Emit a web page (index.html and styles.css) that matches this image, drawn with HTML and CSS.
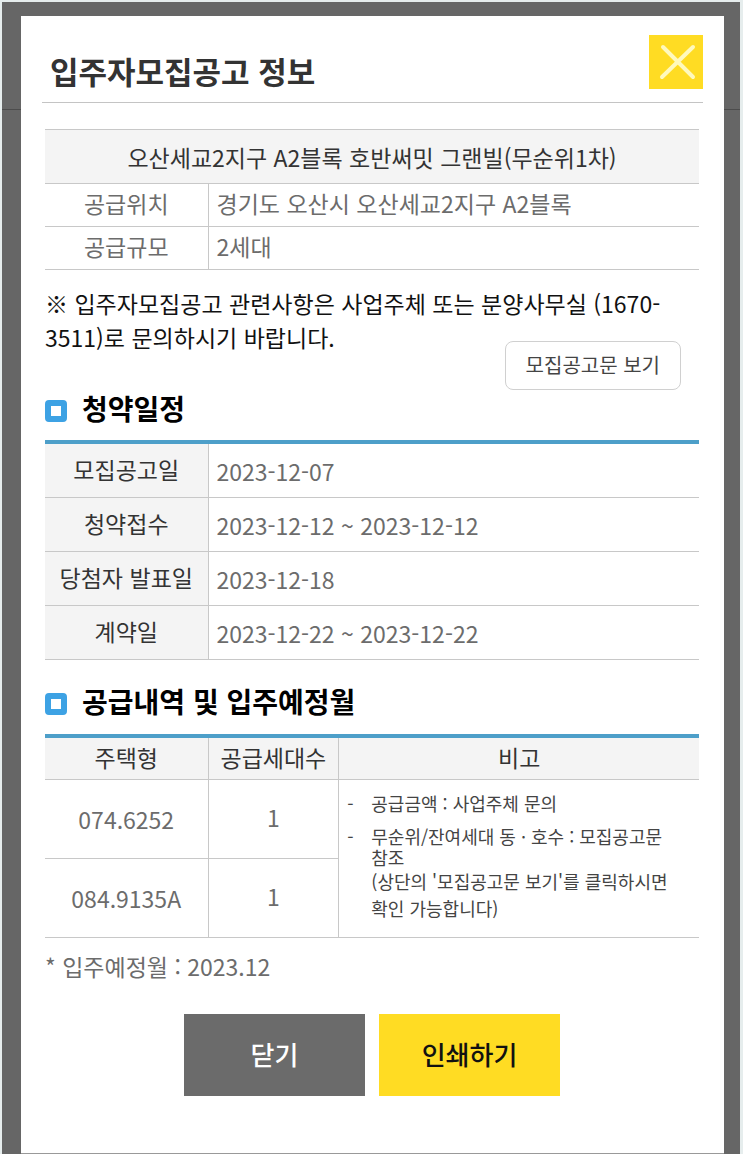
FILE: index.html
```html
<!DOCTYPE html>
<html lang="ko">
<head>
<meta charset="utf-8">
<meta name="viewport" content="width=device-width, initial-scale=1">
<title>입주자모집공고 정보</title>
<link rel="stylesheet" href="styles.css">
</head>
<body>
<div class="backdrop">
  <main class="modal" role="dialog" aria-labelledby="modal-title">
    <header class="modal-header">
      <h1 class="modal-title" id="modal-title">입주자모집공고 정보</h1>
      <button class="close-button" type="button" aria-label="창 닫기">
        <svg class="close-icon" viewBox="0 0 54 54" aria-hidden="true"><path d="M14 12 44 42M44 12 13 42"/></svg>
      </button>
    </header>
    <div class="modal-body">
      <table class="table summary-table">
        <colgroup><col class="col-label"><col></colgroup>
        <thead>
          <tr><th class="summary-name" colspan="2">오산세교2지구 A2블록 호반써밋 그랜빌(무순위1차)</th></tr>
        </thead>
        <tbody>
          <tr><th class="summary-label" scope="row">공급위치</th><td>경기도 오산시 오산세교2지구 A2블록</td></tr>
          <tr><th class="summary-label" scope="row">공급규모</th><td>2세대</td></tr>
        </tbody>
      </table>
      <p class="notice">※ 입주자모집공고 관련사항은 사업주체 또는 분양사무실 (1670-3511)로 문의하시기 바랍니다.</p>

      <div class="schedule-head">
        <h2 class="section-title">청약일정</h2>
        <button class="view-button" type="button">모집공고문 보기</button>
      </div>
      <table class="table accent-table schedule-table">
        <colgroup><col class="col-label"><col></colgroup>
        <tbody>
          <tr><th scope="row">모집공고일</th><td>2023-12-07</td></tr>
          <tr><th scope="row">청약접수</th><td>2023-12-12 ~ 2023-12-12</td></tr>
          <tr><th scope="row">당첨자 발표일</th><td>2023-12-18</td></tr>
          <tr><th scope="row">계약일</th><td>2023-12-22 ~ 2023-12-22</td></tr>
        </tbody>
      </table>

      <h2 class="section-title supply-title">공급내역 및 입주예정월</h2>
      <table class="table accent-table supply-table">
        <colgroup><col class="col-label"><col class="col-count"><col></colgroup>
        <thead>
          <tr><th scope="col">주택형</th><th scope="col">공급세대수</th><th scope="col">비고</th></tr>
        </thead>
        <tbody>
          <tr>
            <td class="type">074.6252</td>
            <td class="count">1</td>
            <td class="remarks" rowspan="2">
              <ul class="remark-list">
                <li>공급금액 : 사업주체 문의</li>
                <li>무순위/잔여세대 동 · 호수 : 모집공고문 참조
                  <p class="remark-detail">(상단의 '모집공고문 보기'를 클릭하시면 확인 가능합니다)</p>
                </li>
              </ul>
            </td>
          </tr>
          <tr><td class="type">084.9135A</td><td class="count">1</td></tr>
        </tbody>
      </table>
      <p class="move-in">* 입주예정월 : 2023.12</p>
      <div class="actions">
        <button class="action action-close" type="button">닫기</button>
        <button class="action action-print" type="button">인쇄하기</button>
      </div>
    </div>
  </main>
</div>
</body>
</html>
```
FILE: styles.css
```css
*,
*::before {
  box-sizing: border-box;
}

body {
  margin: 0;
  background: #e6eded;
  color: #111;
  font-family: "Noto Sans CJK KR", sans-serif;
  font-size: 23px;
  line-height: 34px;
}

h1, h2, p, ul {
  margin: 0;
  padding: 0;
}

button {
  padding: 0;
  border: 0;
  font-family: inherit;
  cursor: pointer;
}

.backdrop {
  position: relative;
  display: flex;
  min-height: 100vh;
  padding: 14px 16px 0 19px;
  border: solid #e6eded;
  border-width: 2px 3px 0 2px;
  background: #666;
}

/* divider of the page behind the dialog */
.backdrop::before {
  content: "";
  position: absolute;
  top: 107px;
  left: 0;
  right: 0;
  height: 1px;
  background: #4c4c4c;
}

.modal {
  position: relative;
  flex: 1;
  padding: 19px 21px 57px;
  border-bottom: 1px solid #999;
  background: #fff;
}

.modal-header {
  display: flex;
  align-items: flex-start;
  justify-content: space-between;
  height: 68px;
  padding-left: 8px;
  border-bottom: 1px solid #c4c4c4;
}

.modal-title {
  padding-top: 14px;
  color: #333;
  font-size: 31px;
  font-weight: 700;
  line-height: 44px;
}

.close-button {
  width: 54px;
  height: 54px;
  background: #ffdc23;
}

.close-icon {
  display: block;
  fill: none;
  stroke: #fff9bd;
  stroke-width: 4;
  stroke-linecap: round;
}

.modal-body {
  padding: 26px 4px 0 3px;
}

.table {
  width: 100%;
  table-layout: fixed;
  border-spacing: 0;
}

.col-label {
  width: 25%;
}

.col-count {
  width: 20%;
}

.table th,
.table td {
  padding: 0 8px;
  border-right: 1px solid #c8c8c8;
  border-bottom: 1px solid #c8c8c8;
  font-weight: 400;
}

.table th {
  padding-bottom: 4px;
  background: #f4f4f4;
  color: #333;
}

.table td {
  color: #6c6c6c;
}

.table tr > :last-child:not(.count) {
  border-right: 0;
}

.table .summary-name {
  height: 55px;
  padding-bottom: 0;
  border-top: 1px solid #c8c8c8;
}

.summary-table tbody tr {
  height: 43px;
}

.table .summary-label {
  background: #fff;
  color: #6c6c6c;
}

.summary-table td {
  padding-bottom: 4px;
}

.notice {
  padding-top: 16px;
}

.schedule-head {
  display: flex;
  justify-content: space-between;
  align-items: flex-start;
  height: 99px;
  margin-top: -13px;
  padding-right: 18px;
}

.section-title {
  display: flex;
  align-items: center;
  gap: 15px;
  color: #000;
  font-size: 28px;
  font-weight: 700;
  line-height: 40px;
}

.section-title::before {
  content: "";
  width: 22px;
  height: 22px;
  margin-top: 6px;
  border: 6px solid #3da2e4;
  border-radius: 4px;
}

.schedule-head .section-title {
  align-self: flex-end;
  padding-bottom: 12px;
}

.view-button {
  height: 49px;
  padding: 0 20px 2px;
  border: 1px solid #d0d0d0;
  border-radius: 8px;
  background: #fff;
  color: #444;
  font-size: 20px;
}

.accent-table {
  border-top: 4px solid #4d9fc9;
}

.schedule-table tr {
  height: 54px;
}

.supply-title {
  padding: 21px 0 13px;
}

.supply-table thead tr {
  height: 42px;
}

.supply-table .type,
.supply-table .count {
  height: 79px;
  text-align: center;
}

.supply-table .count {
  padding-bottom: 4px;
}

.supply-table .remarks {
  padding: 13px 8px 12px;
  color: #444;
  font-size: 18px;
  line-height: 21px;
  vertical-align: top;
  word-break: keep-all;
}

.remark-list {
  display: grid;
  gap: 12px;
  list-style: none;
}

.remark-list li {
  position: relative;
  padding-left: 24px;
}

.remark-list li::before {
  content: "-";
  position: absolute;
  left: 0;
}

.remark-detail {
  line-height: 27px;
}

.move-in {
  padding-top: 11px;
  color: #6c6c6c;
}

.actions {
  display: flex;
  justify-content: center;
  gap: 14px;
  padding-top: 31px;
}

.action {
  width: 181px;
  height: 82px;
  padding-bottom: 4px;
  font-size: 26px;
  font-weight: 500;
}

.action-close {
  background: #6b6b6b;
  color: #fff;
}

.action-print {
  background: #ffdc23;
  color: #111;
}
```
